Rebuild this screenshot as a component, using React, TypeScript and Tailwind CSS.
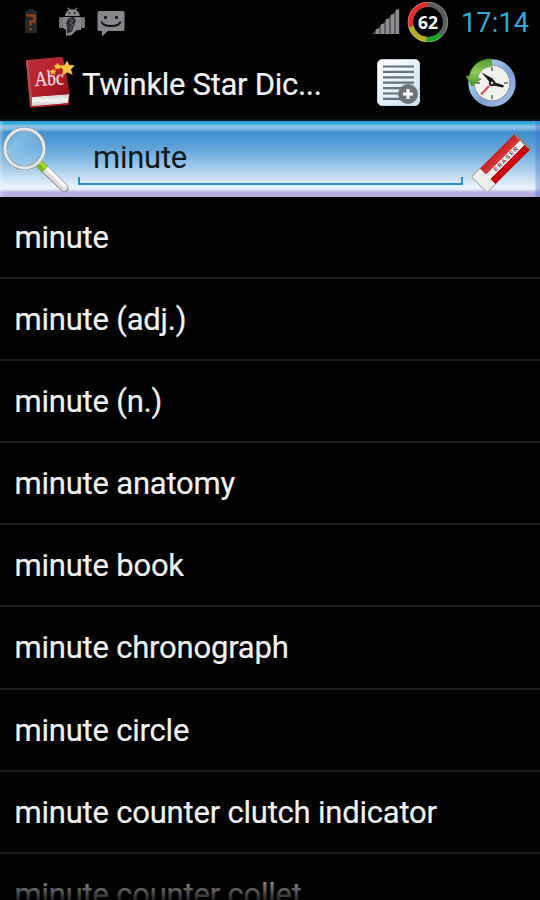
import React from 'react';

const words = [
  'minute',
  'minute (adj.)',
  'minute (n.)',
  'minute anatomy',
  'minute book',
  'minute chronograph',
  'minute circle',
  'minute counter clutch indicator',
  'minute counter collet',
];

function BatteryUnknown() {
  return (
    <svg className="h-7 w-4" viewBox="0 0 16 28">
      <path d="M5 2h6v2h3v22H2V4h3z" fill="#242628" />
      <path d="M3.5 8.500h8v6h-4v4" fill="none" stroke="#99400f" strokeWidth="2.600" />
      <path d="M6 21h3v2H6z" fill="#873a10" />
    </svg>
  );
}

function DroidIcon() {
  return (
    <svg className="h-[30px] w-[28px]" viewBox="0 0 28 30">
      <path d="M7 9c0-3 2-5 4-6L9 1l1-.6 2.400 2a9 9 0 0 1 4 0l2.400-2 1 .6-2 2c2 1 4 3 4 6z" fill="#85878a" />
      <rect x="1" y="10" width="4.500" height="11" rx="1.500" fill="#747679" />
      <rect x="22.500" y="10" width="4.500" height="11" rx="1.500" fill="#747679" />
      <path d="M5 10h18v13h-4l-6 5.500H8V23l-3-2z" fill="#85878a" />
      <path d="M11 11l5-1.500 2 4-2 5-2 6-5 2 0-7-1-4z" fill="#2d2f31" />
      <path d="M12 12l3 2-3 2 3 2-3 3 1 2" fill="none" stroke="#66686a" strokeWidth="1" />
      <path d="M10.500 6H12M16 6h1.500" stroke="#111" strokeWidth="1.500" />
    </svg>
  );
}

function MessageIcon() {
  return (
    <svg className="h-[27px] w-[28px]" viewBox="0 0 28 27">
      <path d="M2 1h24q1.500 0 1.500 1.500v17q0 1.500-1.500 1.500H11l-6 5.500V21H2q-1.500 0-1.500-1.500v-17Q.5 1 2 1z" fill="#85878a" />
      <path d="M7 7.500h3M18 7.500h3" stroke="#111" strokeWidth="2.600" />
      <path d="M4.500 11.500q1 4.500 9.500 4.500t9.500-4.500" fill="none" stroke="#111" strokeWidth="1.800" />
    </svg>
  );
}

function SignalIcon() {
  return (
    <svg className="h-[26px] w-[28px]" viewBox="0 0 28 26">
      <path d="M0 26L27 0v26z" fill="#505254" />
      <path d="M5.500 21v5M10.500 16v10M15.500 11v15M20.500 6.500V26M25.500 1.500V26" stroke="#8b8d8f" strokeWidth="3.400" />
    </svg>
  );
}

function BatteryRing() {
  return (
    <svg className="size-[42px]" viewBox="0 0 42 42">
      <g fill="none" strokeWidth="5.200">
        <circle cx="21" cy="21" r="17.500" stroke="#5c5e60" />
        <path d="M33.400 33.400A17.500 17.500 0 0 1 19.500 38.400" stroke="#17a321" />
        <path d="M19.500 38.400A17.500 17.500 0 0 1 4 25.500" stroke="#b5ad22" />
        <path d="M4 25.500A17.500 17.500 0 0 1 21 3.500" stroke="#e12c2b" />
      </g>
      <circle cx="21" cy="21" r="19.800" fill="none" stroke="#d8d8d8" strokeOpacity=".35" />
      <text x="21" y="27.500" textAnchor="middle" textLength="20" lengthAdjust="spacingAndGlyphs" fill="#fff" className="font-['Open_Sans',sans-serif] text-[18px] font-bold">62</text>
    </svg>
  );
}

function BookIcon() {
  return (
    <svg className="h-[56px] w-[54px]" viewBox="0 0 54 56">
      <defs>
        <linearGradient id="cover" x2="1" y2="1">
          <stop stopColor="#b93138" />
          <stop offset=".55" stopColor="#b31f27" />
          <stop offset="1" stopColor="#8f0f17" />
        </linearGradient>
        <linearGradient id="pages" x2="0" y2="1">
          <stop stopColor="#c9c9c9" />
          <stop offset=".5" stopColor="#f4f4f4" />
          <stop offset="1" stopColor="#bcbcbc" />
        </linearGradient>
      </defs>
      <path d="M2 6L6 45v7l39-3 1-9L39 3 37 2z" fill="#8d1820" />
      <path d="M6 42l39-3-1 9-37 4z" fill="url(#pages)" />
      <path d="M2 6q0-1 1-1l34-3q2 0 2 1l7 36-39 3z" fill="url(#cover)" />
      <path d="M2 6l2-1 4 37v10l-2 0z" fill="#c0454c" />
      <path d="M7 52l38-3" stroke="#b81c25" strokeWidth="1.300" />
      <text x="11" y="31" textLength="29" lengthAdjust="spacingAndGlyphs" transform="rotate(-3 10 31)" fill="#f7dfe0" stroke="#f7dfe0" strokeWidth=".3" className="font-['Liberation_Serif',serif] text-[21px]">Abc</text>
      <g fill="#ffcb3d" stroke="#f3a72c" strokeWidth=".5">
        <path d="M43 6l2.200 4.300 5.300.2-3.700 3.800 1.500 5.200-5-2.300-4.700 2.800.5-5.400-4-3.500 5.500-.8z" />
        <path d="M33.500 8l1 2 2.500.2-1.700 1.700.6 2.300-2.300-1-2.200 1.300.1-2.400-1.600-1.600 2.500-.5z" />
        <path d="M29 14l.8 1.700 2.200.2-1.500 1.500.5 2-2-1-1.900 1.100.1-2-1.500-1.500 2.200-.4z" />
      </g>
    </svg>
  );
}

function AddNoteIcon() {
  return (
    <svg className="h-[50px] w-[46px]" viewBox="0 0 46 50">
      <defs>
        <linearGradient id="note" x2="1" y2="1">
          <stop stopColor="#fff" />
          <stop offset="1" stopColor="#cce2f0" />
        </linearGradient>
      </defs>
      <rect x="1.500" y="1.500" width="42" height="46" rx="4.500" fill="url(#note)" stroke="#c5d2d9" />
      <path d="M7 8.500h31M7 13.900h31M7 19.300h31M7 24.700h31M7 30.100h18M7 35.500h15M7 40.900h17" stroke="#64727a" strokeWidth="2.200" />
      <circle cx="32" cy="36" r="10" fill="#6d7478" />
      <path d="M32 31v10M27 36h10" stroke="#fff" strokeWidth="3.200" />
    </svg>
  );
}

function HistoryIcon() {
  return (
    <svg className="size-[52px]" viewBox="0 0 52 52">
      <defs>
        <linearGradient id="rim" x2="1" y2="1">
          <stop stopColor="#c3dbf5" />
          <stop offset=".6" stopColor="#7aa1d6" />
          <stop offset="1" stopColor="#a5c2e6" />
        </linearGradient>
        <linearGradient id="arrow" x2="0" y2="1">
          <stop stopColor="#4c9c2c" />
          <stop offset=".5" stopColor="#94cb5a" />
          <stop offset="1" stopColor="#3c9124" />
        </linearGradient>
      </defs>
      <circle cx="27" cy="26" r="20.700" fill="#f1f1ee" stroke="url(#rim)" strokeWidth="6" />
      <circle cx="27" cy="26" r="17.800" fill="none" stroke="#8795a5" />
      <path d="M27 10v4M27 38v4M11 26h4M39 26h4" stroke="#85898b" strokeWidth="2" />
      <path d="M26.500 2C15 1.500 5.500 9 4.500 19.500L1 19l6 10 9-7-3.500-.8C14 14 19 10 26.500 9.500z" fill="url(#arrow)" stroke="#4a9830" strokeWidth=".7" />
      <path d="M24 29L16 37.500" stroke="#db4654" strokeWidth="2" />
      <path d="M16.500 15.500L28.500 22l-3 4zM26 24l13 4.500-1 2L26 28z" fill="#111" />
      <circle cx="27" cy="26" r="3.200" fill="#222" />
      <circle cx="27" cy="26" r="1.200" fill="#ddd" />
    </svg>
  );
}

function MagnifierIcon() {
  return (
    <svg className="h-[74px] w-[72px]" viewBox="0 0 72 74">
      <defs>
        <linearGradient id="lens" x2="1" y2="1">
          <stop stopColor="#67aeda" stopOpacity=".45" />
          <stop offset=".3" stopColor="#b4daf1" stopOpacity=".5" />
          <stop offset="1" stopColor="#8cc4e8" stopOpacity=".1" />
        </linearGradient>
      </defs>
      <path d="M41 44.500L64.500 67" stroke="#8a8f94" strokeWidth="8.500" strokeLinecap="round" />
      <path d="M41 44L64.300 66.500" stroke="#dedede" strokeWidth="7" strokeLinecap="round" />
      <path d="M43 43.500L65 65" stroke="#fff" strokeWidth="2.500" strokeLinecap="round" />
      <path d="M38.500 42L45 48.500" stroke="#78b71b" strokeWidth="8.500" />
      <path d="M40 41L46 47" stroke="#a4dc2c" strokeWidth="3" />
      <circle cx="24.500" cy="27.500" r="19.500" fill="url(#lens)" stroke="#8d9499" strokeWidth="4" />
      <circle cx="24.500" cy="27.500" r="19.500" fill="none" stroke="#e6e7e7" strokeWidth="2.900" />
    </svg>
  );
}

function EraserIcon() {
  return (
    <svg className="h-[64px] w-[62px]" viewBox="0 0 62 64">
      <defs>
        <linearGradient id="eraser" x2="0" y2="1">
          <stop stopColor="#c41f1f" />
          <stop offset=".37" stopColor="#dc3a3a" />
          <stop offset=".38" stopColor="#f7f0f0" />
          <stop offset=".66" stopColor="#f7f0f0" />
          <stop offset=".67" stopColor="#c90007" />
          <stop offset="1" stopColor="#c90007" />
        </linearGradient>
      </defs>
      <g transform="translate(1.500 47) rotate(-45)">
        <rect x="58" y="0" width="4.500" height="22" rx="1" fill="#7f8787" />
        <rect x="0" y="0" width="14" height="22" rx="1.500" fill="#ededeb" stroke="#a8aaaa" />
        <rect x="12" y="0" width="48" height="22" fill="url(#eraser)" />
        <text x="21" y="13.600" textLength="32" lengthAdjust="spacing" fill="#794449" className="font-['Liberation_Sans',sans-serif] text-[6px] font-bold">ERASER</text>
      </g>
    </svg>
  );
}

export default function App() {
  return (
    <main className="relative flex h-[900px] w-[540px] flex-col overflow-hidden bg-black font-[Roboto,sans-serif] text-[#f1f1f1]">
      <header className="flex h-[44px] shrink-0 items-center">
        <div className="mb-[3px] ml-[23px]"><BatteryUnknown /></div>
        <div className="ml-[19px]"><DroidIcon /></div>
        <div className="mt-[3px] ml-[11px]"><MessageIcon /></div>
        <div className="ml-auto flex items-center">
          <div className="mr-[7px] mb-[3px]"><SignalIcon /></div>
          <BatteryRing />
          <time className="mt-[2px] mr-[11px] ml-[12px] w-[68px] text-[27px] leading-[42px] tracking-[0.2px] whitespace-nowrap text-[#33a9d6]">17:14</time>
        </div>
      </header>
      <div className="flex h-[77px] shrink-0 items-center border-b-2 border-[#04171e]">
        <div className="mt-[3px] ml-[24px]"><BookIcon /></div>
        <h1 className="mt-[6px] ml-[4px] w-[246px] text-[31px] leading-[40px] tracking-[-0.3px] whitespace-nowrap [-webkit-text-stroke:0.2px_#f1f1f1]">Twinkle Star Dic...</h1>
        <button className="mt-[2px] ml-[48px]" aria-label="Add note"><AddNoteIcon /></button>
        <button className="mt-[3px] ml-[43px]" aria-label="History"><HistoryIcon /></button>
      </div>
      <section className="flex h-[76px] shrink-0 items-start bg-[linear-gradient(to_right,rgba(255,255,255,0.3)_0px,transparent_4px,transparent_534px,rgba(60,100,200,0.35)_537px),linear-gradient(to_bottom,#20a0d6_0px,#3fafdd_3px,#92c3e4_5px,#86bbe1_8px,#3f90cf_11px,#62a5da_28px,#a0c9ea_46px,#e2eefa_64px,#eaf2fc_68px,#bbb2e2_71px,#b5addf_76px)]">
        <MagnifierIcon />
        <div className="mt-[12px] ml-[6px] flex h-[53px] w-[385px] flex-col">
          <div className="h-[44px] pl-[15px] text-[31px] leading-[49px] tracking-[-0.25px] text-[#101820]">minute</div>
          <div className="h-[8px] border-x-2 border-b-2 border-[#2590c2]" />
        </div>
        <div className="mt-[9px] ml-[7px]"><EraserIcon /></div>
      </section>
      <ul className="flex flex-col">
        {words.map((word) => (
          <li key={word} className="h-[82.1px] shrink-0 border-b-2 border-[#1b1b1b] pl-[14.500px] text-[31px] leading-[82px] tracking-[-0.21px] whitespace-nowrap [-webkit-text-stroke:0.2px_#f1f1f1]">{word}</li>
        ))}
      </ul>
      <div className="absolute inset-x-0 bottom-0 h-[28px] bg-linear-to-b from-black/20 to-black/85" />
    </main>
  );
}
